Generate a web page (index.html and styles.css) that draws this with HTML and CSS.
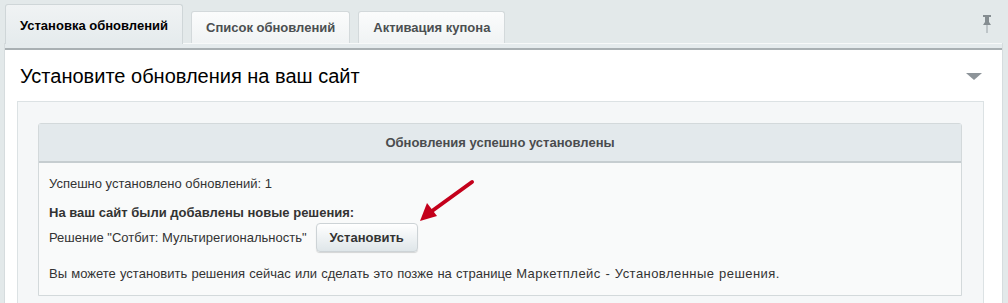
FILE: index.html
```html
<!DOCTYPE html>
<html>
<head>
    <title>Обновление системы</title>
    <link rel="stylesheet" href="styles.css">
    <meta charset="utf-8">
</head>
<body>
    <div class="tabs">
        <div class="tab active">Установка обновлений</div>
        <div class="tab">Список обновлений</div>
        <div class="tab">Активация купона</div>
        <svg class="pin" width="10" height="18" viewBox="0 0 10 18">
            <rect x="1" y="0" width="8" height="2" fill="#858d91"/>
            <rect x="3" y="2" width="4" height="5" fill="#858d91"/>
            <polygon points="3,7 7,7 9,10 1,10" fill="#858d91"/>
            <rect x="4.5" y="10" width="1" height="8" fill="#9aa1a5"/>
        </svg>
    </div>

    <div class="panel">
        <div class="panel-strip"></div>
        <div class="panel-head">
            <h1>Установите обновления на ваш сайт</h1>
            <span class="toggle"></span>
        </div>
        <div class="section">
            <div class="box">
                <div class="box-title">Обновления успешно установлены</div>
                <div class="box-body">
                    <p class="line">Успешно установлено обновлений: 1</p>
                    <p class="line bold">На ваш сайт были добавлены новые решения:</p>
                    <div class="solution">
                        <span>Решение "Сотбит: Мультирегиональность"</span>
                        <button class="btn">Установить</button>
                    </div>
                    <p class="line note">Вы можете установить решения сейчас или сделать это позже на странице <span class="link">Маркетплейс - Установленные решения</span>.</p>
                </div>
                <svg class="arrow" width="60" height="46" viewBox="0 0 60 46">
                    <line x1="54" y1="3" x2="14" y2="32" stroke="#c4001b" stroke-width="4" stroke-linecap="round"/>
                    <polygon points="2,42 9,24 19,37" fill="#c4001b"/>
                </svg>
            </div>
        </div>
    </div>
</body>
</html>
```

FILE: styles.css
```css
body {
    margin: 0;
    background-color: #e3e9ea;
    font-family: 'Liberation Sans', Arial, sans-serif;
    font-size: 13px;
    color: #333;
}

.tabs {
    display: flex;
    align-items: flex-end;
    gap: 8px;
    height: 43px;
    padding-left: 5px;
    position: relative;
}

.tab {
    height: 32px;
    line-height: 31px;
    padding: 0 14px;
    border: 1px solid #d3d9db;
    border-bottom: none;
    border-radius: 3px 3px 0 0;
    background: linear-gradient(#fbfcfc, #f0f3f4);
    font-weight: bold;
    color: #4b4f51;
    box-sizing: border-box;
}

.tab.active {
    width: 178px;
    height: 40px;
    line-height: 42px;
    padding: 0 0 0 14px;
    margin-bottom: -1px;
    background: linear-gradient(#f0f3f4, #e5ebed);
    border-color: #cfd6d8;
    color: #000;
    position: relative;
    z-index: 1;
}

.pin {
    position: absolute;
    right: 16px;
    top: 15px;
}

.panel {
    margin: 0 5px 0 4px;
    background: #fff;
    border-left: 1px solid #d6dcde;
    border-right: 1px solid #d6dcde;
}

.panel-strip {
    height: 4px;
    background: #e5ebed;
    border-top: 1px solid #f7f9f9;
    border-bottom: 2px solid #a9b0b3;
}

.panel-head {
    display: flex;
    align-items: center;
    justify-content: space-between;
    height: 51px;
    padding: 0 20px 0 15px;
}

h1 {
    margin: 0;
    font-size: 20px;
    font-weight: normal;
    color: #000;
    padding-top: 2px;
}

.toggle {
    width: 0;
    height: 0;
    border-left: 8px solid transparent;
    border-right: 8px solid transparent;
    border-top: 7px solid #8d9499;
    margin-top: 2px;
}

.section {
    margin: 0 18px 0 12px;
    background: #f5f7f8;
    border: 1px solid #dce2e4;
    padding: 21px 21px 20px 20px;
}

.box {
    border: 1px solid #d3d9db;
    border-radius: 3px 3px 0 0;
    background: #f9fafa;
    position: relative;
}

.box-title {
    height: 37px;
    line-height: 38px;
    text-align: center;
    background: #e3e9ec;
    border-bottom: 2px solid #c6cdd0;
    font-weight: bold;
    color: #4a4c4e;
}

.box-body {
    padding: 13px 10px 13px 10px;
}

.line {
    margin: 0;
    line-height: 16px;
}

.bold {
    font-weight: bold;
    margin-top: 13px;
}

.solution {
    display: flex;
    align-items: center;
    gap: 9px;
    margin-top: 2px;
    height: 29px;
}

.btn {
    height: 29px;
    padding: 0 13px;
    border: 1px solid #cdd3d6;
    border-radius: 4px;
    background: linear-gradient(#ffffff, #dfe6e9);
    box-shadow: 0 1px 1px rgba(0, 0, 0, 0.15);
    font-family: 'Liberation Sans', Arial, sans-serif;
    font-size: 13px;
    font-weight: bold;
    color: #333;
}

.note {
    margin-top: 14px;
    word-spacing: 0.6px;
}

.link {
    letter-spacing: 0.45px;
}

.arrow {
    position: absolute;
    left: 379px;
    top: 55px;
}
```
